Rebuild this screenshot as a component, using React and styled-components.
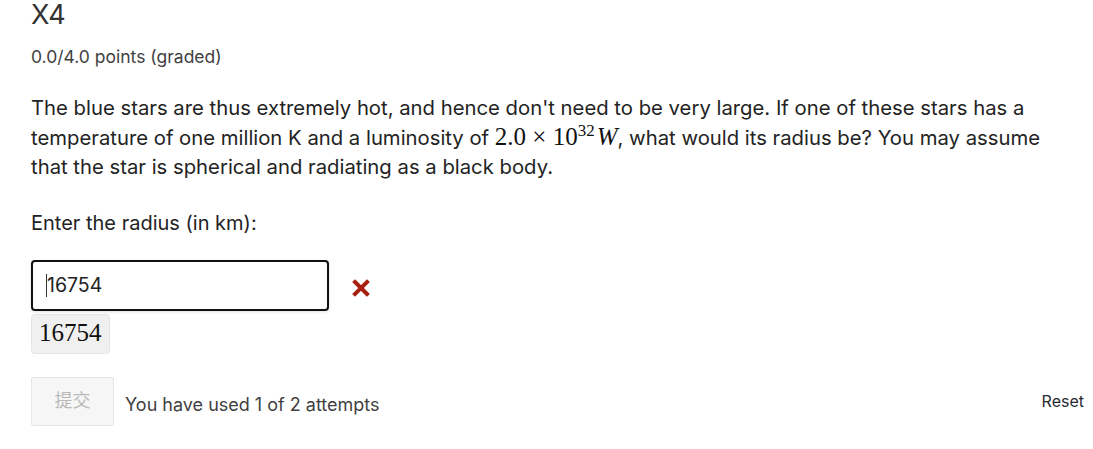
import React from 'react';
import styled, { createGlobalStyle } from 'styled-components';

const GlobalStyle = createGlobalStyle`
  body {
    margin: 0;
    background: #fff;
    font-family: Inter, "Noto Sans", sans-serif;
    color: #222;
  }
`;

const Problem = styled.div`
  padding: 0 9px 0 31px;
`;

const Title = styled.h3`
  margin: 0;
  font-size: 27px;
  font-weight: 400;
  line-height: 30px;
  color: #333;
`;

const Points = styled.div`
  margin-top: 15px;
  font-size: 17.5px;
  line-height: 24px;
  color: #414141;
`;

const Question = styled.p`
  margin: 24px 0 0;
  font-size: 20.3px;
  line-height: 29.5px;
  color: #232323;
  max-width: 1030px;
`;

const MathInline = styled.span`
  display: inline-block;
  font-family: "Liberation Serif", "DejaVu Serif", serif;
  font-size: 25px;
  line-height: 22px;
  color: #111;
  font-style: ${props => (props.italic ? 'italic' : 'normal')};
`;

const Sup = styled.span`
  display: inline-block;
  font-size: 17px;
  line-height: 14px;
  vertical-align: 9px;
  margin-right: 2px;
`;

const Label = styled.div`
  margin-top: 27px;
  font-size: 20px;
  line-height: 28px;
  color: #232323;
`;

const InputRow = styled.div`
  margin-top: 23px;
  display: flex;
  align-items: center;
  gap: 23px;
`;

const TextInput = styled.div`
  box-sizing: border-box;
  width: 298px;
  height: 51px;
  border: 2px solid #111;
  border-radius: 4px;
  box-shadow: 0 1px 3px rgba(0, 60, 120, 0.15);
  display: flex;
  align-items: center;
  padding-left: 13px;
  font-size: 19.5px;
  color: #222;
`;

const Caret = styled.span`
  display: inline-block;
  width: 1px;
  height: 23px;
  background: #333;
`;

const Preview = styled.div`
  display: inline-block;
  margin-top: 3px;
  padding: 4px 7px 6px;
  background: #f0f0f0;
  border: 1px solid #e4e4e4;
  border-radius: 4px;
  font-family: "Liberation Serif", "DejaVu Serif", serif;
  font-size: 25px;
  line-height: 28px;
  color: #111;
`;

const ActionBar = styled.div`
  margin-top: 22px;
  display: flex;
  align-items: center;
`;

const SubmitButton = styled.button`
  box-sizing: border-box;
  width: 83px;
  height: 49px;
  background: #f6f6f6;
  border: 1px solid #e6e6e6;
  border-radius: 2px;
  color: #b9b9b9;
  font-family: Inter, "Noto Sans CJK SC", sans-serif;
  font-size: 18px;
  padding: 0 0 4px;
  margin-top: 1px;
`;

const Attempts = styled.span`
  margin-left: 11px;
  margin-top: 8px;
  font-size: 18px;
  color: #414141;
`;

const ResetButton = styled.button`
  margin-left: auto;
  background: none;
  border: none;
  padding: 0;
  font-family: Inter, sans-serif;
  font-size: 16px;
  color: #1f2a33;
`;

const CrossIcon = () => (
  <svg width="18" height="18" viewBox="0 0 18 18" style={{ marginTop: 6 }}>
    <path d="M3 3 L15 15 M15 3 L3 15" stroke="#a8200f" strokeWidth="4" strokeLinecap="square" />
  </svg>
);

const App = () => (
  <>
    <GlobalStyle />
    <Problem>
      <Title>X4</Title>
      <Points>0.0/4.0 points (graded)</Points>
      <Question>
        The blue stars are thus extremely hot, and hence don't need to be very large. If one of these stars has a
        temperature of one million K and a luminosity of{' '}
        <MathInline>2.0 × 10<Sup>32</Sup><i>W</i></MathInline>, what would its radius be? You may assume that the
        star is spherical and radiating as a black body.
      </Question>
      <Label>Enter the radius (in km):</Label>
      <InputRow>
        <TextInput>
          <Caret />
          16754
        </TextInput>
        <CrossIcon />
      </InputRow>
      <Preview>16754</Preview>
      <ActionBar>
        <SubmitButton disabled>提交</SubmitButton>
        <Attempts>You have used 1 of 2 attempts</Attempts>
        <ResetButton>Reset</ResetButton>
      </ActionBar>
    </Problem>
  </>
);

export default App;
